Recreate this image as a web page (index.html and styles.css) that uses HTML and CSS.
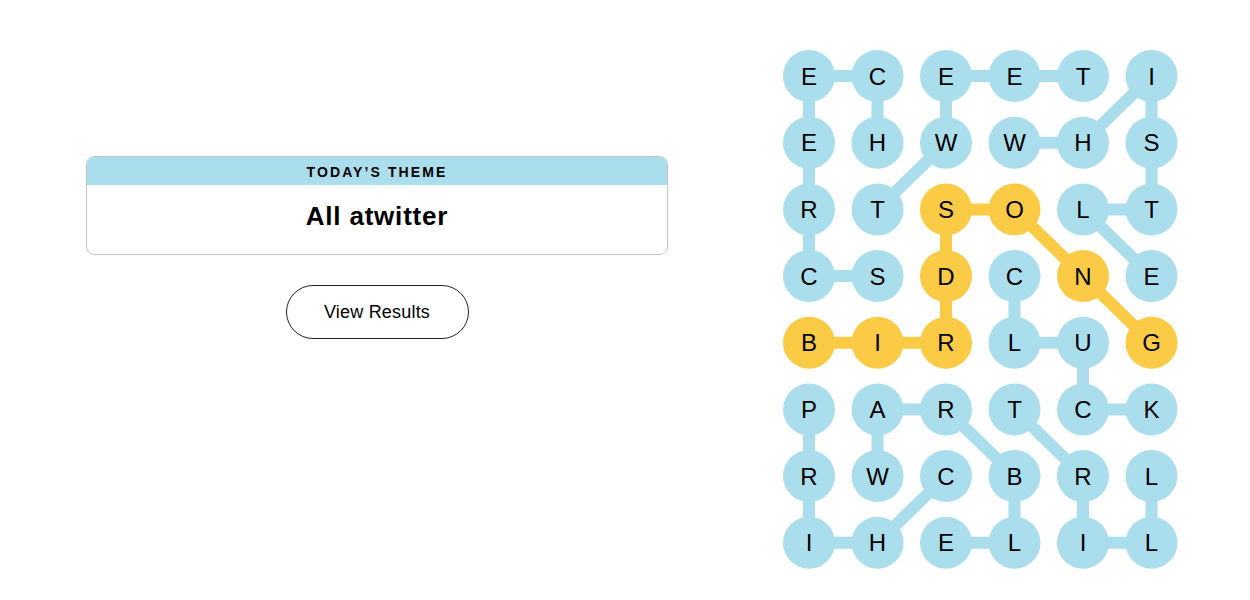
FILE: index.html
```html
<!DOCTYPE html>
<html lang="en">
<head>
    <meta charset="UTF-8">
    <meta name="viewport" content="width=device-width, initial-scale=1.0">
    <title>Strands</title>
    <link rel="stylesheet" href="styles.css">
</head>
<body>
    <div class="page">
        <div class="theme-panel">
            <div class="theme-card">
                <div class="theme-label">TODAY&#8217;S THEME</div>
                <div class="theme-title">All atwitter</div>
            </div>
            <button class="results-btn">View Results</button>
        </div>

        <svg class="board" width="395" height="519" viewBox="0 0 395 519">
            <g class="link blue">
                <!-- SCREECH -->
                <line x1="26" y1="226" x2="94.5" y2="226"/>
                <line x1="26" y1="226" x2="26" y2="26"/>
                <line x1="26" y1="26" x2="94.5" y2="26"/>
                <line x1="94.5" y1="26" x2="94.5" y2="92.7"/>
                <!-- TWEET -->
                <line x1="94.5" y1="159.4" x2="163" y2="92.7"/>
                <line x1="163" y1="92.7" x2="163" y2="26"/>
                <line x1="163" y1="26" x2="300" y2="26"/>
                <!-- WHISTLE -->
                <line x1="231.5" y1="92.7" x2="300" y2="92.7"/>
                <line x1="300" y1="92.7" x2="368.5" y2="26"/>
                <line x1="368.5" y1="26" x2="368.5" y2="159.4"/>
                <line x1="368.5" y1="159.4" x2="300" y2="159.4"/>
                <line x1="300" y1="159.4" x2="368.5" y2="226"/>
                <!-- CLUCK -->
                <line x1="231.5" y1="226" x2="231.5" y2="292.7"/>
                <line x1="231.5" y1="292.7" x2="300" y2="292.7"/>
                <line x1="300" y1="292.7" x2="300" y2="359.4"/>
                <line x1="300" y1="359.4" x2="368.5" y2="359.4"/>
                <!-- CHIRP -->
                <line x1="163" y1="426" x2="94.5" y2="492.7"/>
                <line x1="94.5" y1="492.7" x2="26" y2="492.7"/>
                <line x1="26" y1="492.7" x2="26" y2="359.4"/>
                <!-- WARBLE -->
                <line x1="94.5" y1="426" x2="94.5" y2="359.4"/>
                <line x1="94.5" y1="359.4" x2="163" y2="359.4"/>
                <line x1="163" y1="359.4" x2="231.5" y2="426"/>
                <line x1="231.5" y1="426" x2="231.5" y2="492.7"/>
                <line x1="231.5" y1="492.7" x2="163" y2="492.7"/>
                <!-- TRILL -->
                <line x1="231.5" y1="359.4" x2="300" y2="426"/>
                <line x1="300" y1="426" x2="300" y2="492.7"/>
                <line x1="300" y1="492.7" x2="368.5" y2="492.7"/>
                <line x1="368.5" y1="492.7" x2="368.5" y2="426"/>
            </g>
            <g class="link gold">
                <!-- BIRDSONG -->
                <line x1="26" y1="292.7" x2="163" y2="292.7"/>
                <line x1="163" y1="292.7" x2="163" y2="159.4"/>
                <line x1="163" y1="159.4" x2="231.5" y2="159.4"/>
                <line x1="231.5" y1="159.4" x2="368.5" y2="292.7"/>
            </g>

            <g class="dots">
                <circle class="blue" cx="26" cy="26" r="26"/><text x="26" y="26">E</text>
                <circle class="blue" cx="94.5" cy="26" r="26"/><text x="94.5" y="26">C</text>
                <circle class="blue" cx="163" cy="26" r="26"/><text x="163" y="26">E</text>
                <circle class="blue" cx="231.5" cy="26" r="26"/><text x="231.5" y="26">E</text>
                <circle class="blue" cx="300" cy="26" r="26"/><text x="300" y="26">T</text>
                <circle class="blue" cx="368.5" cy="26" r="26"/><text x="368.5" y="26">I</text>

                <circle class="blue" cx="26" cy="92.7" r="26"/><text x="26" y="92.7">E</text>
                <circle class="blue" cx="94.5" cy="92.7" r="26"/><text x="94.5" y="92.7">H</text>
                <circle class="blue" cx="163" cy="92.7" r="26"/><text x="163" y="92.7">W</text>
                <circle class="blue" cx="231.5" cy="92.7" r="26"/><text x="231.5" y="92.7">W</text>
                <circle class="blue" cx="300" cy="92.7" r="26"/><text x="300" y="92.7">H</text>
                <circle class="blue" cx="368.5" cy="92.7" r="26"/><text x="368.5" y="92.7">S</text>

                <circle class="blue" cx="26" cy="159.4" r="26"/><text x="26" y="159.4">R</text>
                <circle class="blue" cx="94.5" cy="159.4" r="26"/><text x="94.5" y="159.4">T</text>
                <circle class="gold" cx="163" cy="159.4" r="26"/><text x="163" y="159.4">S</text>
                <circle class="gold" cx="231.5" cy="159.4" r="26"/><text x="231.5" y="159.4">O</text>
                <circle class="blue" cx="300" cy="159.4" r="26"/><text x="300" y="159.4">L</text>
                <circle class="blue" cx="368.5" cy="159.4" r="26"/><text x="368.5" y="159.4">T</text>

                <circle class="blue" cx="26" cy="226" r="26"/><text x="26" y="226">C</text>
                <circle class="blue" cx="94.5" cy="226" r="26"/><text x="94.5" y="226">S</text>
                <circle class="gold" cx="163" cy="226" r="26"/><text x="163" y="226">D</text>
                <circle class="blue" cx="231.5" cy="226" r="26"/><text x="231.5" y="226">C</text>
                <circle class="gold" cx="300" cy="226" r="26"/><text x="300" y="226">N</text>
                <circle class="blue" cx="368.5" cy="226" r="26"/><text x="368.5" y="226">E</text>

                <circle class="gold" cx="26" cy="292.7" r="26"/><text x="26" y="292.7">B</text>
                <circle class="gold" cx="94.5" cy="292.7" r="26"/><text x="94.5" y="292.7">I</text>
                <circle class="gold" cx="163" cy="292.7" r="26"/><text x="163" y="292.7">R</text>
                <circle class="blue" cx="231.5" cy="292.7" r="26"/><text x="231.5" y="292.7">L</text>
                <circle class="blue" cx="300" cy="292.7" r="26"/><text x="300" y="292.7">U</text>
                <circle class="gold" cx="368.5" cy="292.7" r="26"/><text x="368.5" y="292.7">G</text>

                <circle class="blue" cx="26" cy="359.4" r="26"/><text x="26" y="359.4">P</text>
                <circle class="blue" cx="94.5" cy="359.4" r="26"/><text x="94.5" y="359.4">A</text>
                <circle class="blue" cx="163" cy="359.4" r="26"/><text x="163" y="359.4">R</text>
                <circle class="blue" cx="231.5" cy="359.4" r="26"/><text x="231.5" y="359.4">T</text>
                <circle class="blue" cx="300" cy="359.4" r="26"/><text x="300" y="359.4">C</text>
                <circle class="blue" cx="368.5" cy="359.4" r="26"/><text x="368.5" y="359.4">K</text>

                <circle class="blue" cx="26" cy="426" r="26"/><text x="26" y="426">R</text>
                <circle class="blue" cx="94.5" cy="426" r="26"/><text x="94.5" y="426">W</text>
                <circle class="blue" cx="163" cy="426" r="26"/><text x="163" y="426">C</text>
                <circle class="blue" cx="231.5" cy="426" r="26"/><text x="231.5" y="426">B</text>
                <circle class="blue" cx="300" cy="426" r="26"/><text x="300" y="426">R</text>
                <circle class="blue" cx="368.5" cy="426" r="26"/><text x="368.5" y="426">L</text>

                <circle class="blue" cx="26" cy="492.7" r="26"/><text x="26" y="492.7">I</text>
                <circle class="blue" cx="94.5" cy="492.7" r="26"/><text x="94.5" y="492.7">H</text>
                <circle class="blue" cx="163" cy="492.7" r="26"/><text x="163" y="492.7">E</text>
                <circle class="blue" cx="231.5" cy="492.7" r="26"/><text x="231.5" y="492.7">L</text>
                <circle class="blue" cx="300" cy="492.7" r="26"/><text x="300" y="492.7">I</text>
                <circle class="blue" cx="368.5" cy="492.7" r="26"/><text x="368.5" y="492.7">L</text>
            </g>
        </svg>
    </div>
</body>
</html>
```

FILE: styles.css
```css
body {
    margin: 0;
    background: #fff;
    color: #000;
    font-family: "Liberation Sans", Arial, sans-serif;
}
.page {
    display: flex;
    align-items: flex-start;
    padding: 50px 72px 0 86px;
}
.theme-panel {
    width: 582px;
    margin-top: 106px;
    display: flex;
    flex-direction: column;
    align-items: center;
}
.theme-card {
    width: 100%;
    box-sizing: border-box;
    border: 1px solid #c6c6c6;
    border-radius: 8px;
    overflow: hidden;
}
.theme-label {
    background: #abdeec;
    height: 28px;
    line-height: 30px;
    text-align: center;
    font-size: 14px;
    font-weight: bold;
    letter-spacing: 2.1px;
}
.theme-title {
    height: 69px;
    line-height: 62px;
    text-align: center;
    font-size: 26px;
    font-weight: bold;
    letter-spacing: 0.8px;
}
.results-btn {
    margin-top: 30px;
    width: 183px;
    height: 54px;
    background: #fff;
    color: #000;
    border: 1px solid #222;
    border-radius: 27px;
    font-family: "Liberation Sans", Arial, sans-serif;
    font-size: 18px;
    letter-spacing: 0.2px;
    cursor: pointer;
}
.board {
    margin-left: auto;
    display: block;
}
.link line {
    stroke-width: 12;
}
.link.blue line {
    stroke: #abdeec;
}
.link.gold line {
    stroke: #fbcb46;
}
.dots circle.blue {
    fill: #abdeec;
}
.dots circle.gold {
    fill: #fbcb46;
}
.dots text {
    font-family: "Liberation Sans", Arial, sans-serif;
    font-size: 24px;
    text-anchor: middle;
    dominant-baseline: central;
    fill: #000;
}
```
